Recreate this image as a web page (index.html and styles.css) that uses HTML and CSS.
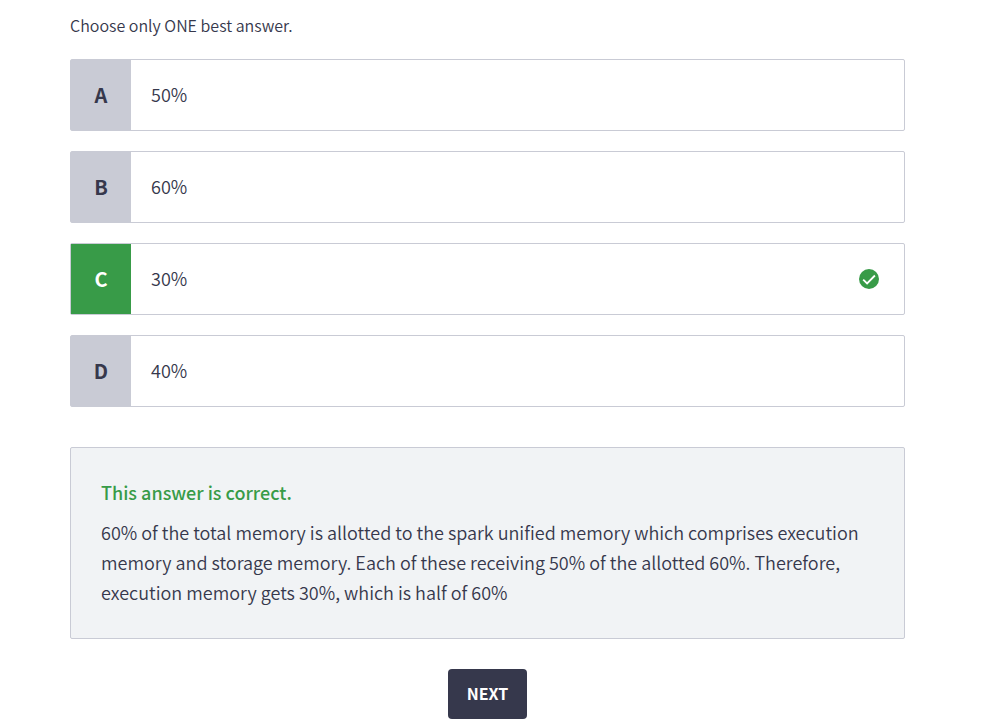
FILE: index.html
```html
<!DOCTYPE html>
<html lang="en">
<head>
<meta charset="utf-8">
<title>Quiz question</title>
<link rel="stylesheet" href="styles.css">
</head>
<body>
<main class="quiz">
  <p class="hint">Choose only ONE best answer.</p>
  <div class="options">
    <button type="button" class="option"><span class="letter">A</span><span class="answer">50%</span></button>
    <button type="button" class="option"><span class="letter">B</span><span class="answer">60%</span></button>
    <button type="button" class="option correct"><span class="letter">C</span><span class="answer">30%</span>
      <svg class="check" viewBox="0 0 20 20" role="img" aria-label="Correct"><circle cx="10" cy="10" r="10" fill="#389b48"/><path d="M4.2 10.6l3.9 3.9 7.8-8" fill="none" stroke="#fff" stroke-width="1.8"/></svg>
    </button>
    <button type="button" class="option"><span class="letter">D</span><span class="answer">40%</span></button>
  </div>
  <section class="feedback">
    <h2 class="verdict">This answer is correct.</h2>
    <p class="explanation">60% of the total memory is allotted to the spark unified memory which comprises execution memory and storage memory. Each of these receiving 50% of the allotted 60%. Therefore, execution memory gets 30%, which is half of 60%</p>
  </section>
  <button type="button" class="next">NEXT</button>
</main>
</body>
</html>
```

FILE: styles.css
```css
* {
  box-sizing: border-box;
}

body {
  margin: 0;
  background: #fff;
  color: #36384c;
  font-family: "Noto Sans CJK SC", "Open Sans", sans-serif;
  font-size: 18px;
  font-weight: 350;
  line-height: 30px;
}

.quiz {
  display: flex;
  flex-direction: column;
  margin: 0 101px 0 70px;
  padding: 10px 0 3px;
}

.hint {
  margin: 0 0 19px;
  font-size: 16px;
}

.options {
  display: grid;
  gap: 20px;
}

.option {
  display: flex;
  align-items: center;
  min-height: 72px;
  padding: 0;
  border: 1px solid #c9cbd5;
  border-radius: 2px;
  background: #fff;
  color: inherit;
  font: inherit;
  text-align: left;
  cursor: pointer;
}

.letter {
  display: grid;
  place-items: center;
  align-self: stretch;
  width: 60px;
  background: #c9cbd5;
  font-size: 20px;
  font-weight: 700;
}

.correct .letter {
  background: #389b48;
  color: #fff;
}

.answer {
  flex: 1;
  padding: 0 20px 2px;
}

.check {
  width: 20px;
  height: 20px;
  margin-right: 25px;
}

.feedback {
  margin-top: 40px;
  padding: 29px 30px 31px;
  border: 1px solid #c9cbd5;
  border-radius: 2px;
  background: #f1f3f5;
}

.verdict {
  margin: 0 0 10px;
  color: #389b48;
  font-size: 18px;
  font-weight: 500;
}

.explanation {
  margin: 0;
}

.next {
  align-self: center;
  height: 50px;
  margin-top: 30px;
  padding: 0 19px 2px;
  border: 0;
  border-radius: 4px;
  background: #36384c;
  color: #fff;
  font: inherit;
  font-size: 16px;
  font-weight: 700;
  cursor: pointer;
}
```
